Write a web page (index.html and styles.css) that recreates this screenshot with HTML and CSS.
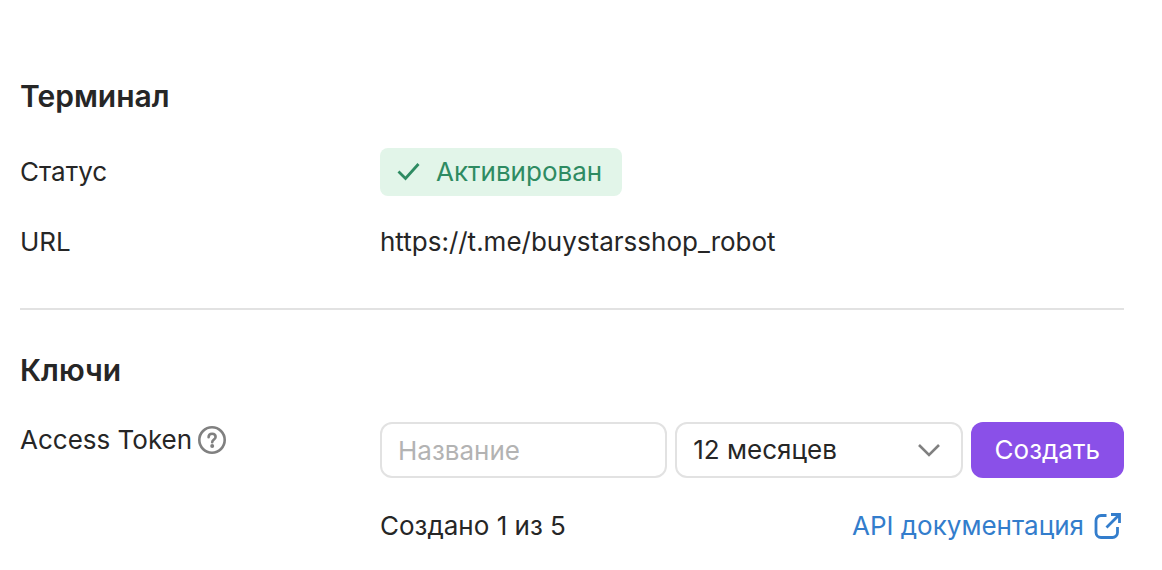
FILE: index.html
```html
<!DOCTYPE html>
<html lang="ru">
<head>
  <meta charset="UTF-8" />
  <meta name="viewport" content="width=device-width, initial-scale=1.0" />
  <title>Терминал</title>
  <link rel="stylesheet" href="styles.css">
</head>
<body>
  <main class="page">
    <!-- Terminal info -->
    <section class="section">
      <h2 class="section-title">Терминал</h2>
      <dl class="info">
        <div class="row">
          <dt class="label">Статус</dt>
          <dd class="value">
            <span class="status">
              <svg class="status-icon" viewBox="0 0 24 24" aria-hidden="true">
                <path d="M2.500 11.500l7 7L22.500 4" />
              </svg>
              Активирован
            </span>
          </dd>
        </div>
        <div class="row">
          <dt class="label">URL</dt>
          <dd class="value">https://t.me/buystarsshop_robot</dd>
        </div>
      </dl>
    </section>

    <!-- Access keys -->
    <section class="section keys">
      <h2 class="section-title">Ключи</h2>
      <div class="row row-top">
        <div class="label label-help">
          <label for="token-name">Access Token</label>
          <svg class="help-icon" viewBox="0 0 28 28" role="img" aria-label="Подсказка">
            <circle cx="14" cy="14" r="12.7" />
            <path d="M10.6 11.2c0-2 1.400-3.400 3.500-3.400s3.500 1.400 3.500 3.200c0 2.500-3.400 2.600-3.400 5.300" />
            <circle class="help-dot" cx="14.2" cy="20" r="2" />
          </svg>
        </div>
        <div class="value">
          <form class="token-form">
            <input class="field" id="token-name" type="text" placeholder="Название">
            <div class="select-wrap">
              <select class="field" aria-label="Срок действия">
                <option>12 месяцев</option>
              </select>
              <svg class="select-arrow" viewBox="0 0 24 24" aria-hidden="true">
                <path d="M2 7l10 10L22 7" />
              </svg>
            </div>
            <button class="button" type="submit">Создать</button>
          </form>
          <div class="summary">
            <span>Создано 1 из 5</span>
            <a class="link" href="#">
              API документация
              <svg class="link-icon" viewBox="0 0 28 28" aria-hidden="true">
                <path d="M12.5 3.500H7a5 5 0 0 0-5 5V20.500a5 5 0 0 0 5 5h11.500a5 5 0 0 0 5-5V15M17 2.500H25.500V11M25.500 2.500L12.500 15.500" />
              </svg>
            </a>
          </div>
        </div>
      </div>
    </section>
  </main>
</body>
</html>
```
FILE: styles.css
```css
* {
  margin: 0;
  padding: 0;
  box-sizing: border-box;
}
body {
  font-family: Inter, "Liberation Sans", sans-serif;
  font-size: 26px;
  line-height: 32px;
  color: #262626;
  background-color: #fff;
}
.page {
  padding: 76px 38px 28px 20px;
}
.section-title {
  font-size: 30px;
  line-height: 40px;
  font-weight: 600;
  margin-bottom: 32px;
}
/* Second section is divided from the first one */
.keys {
  margin-top: 50px;
  padding-top: 40px;
  border-top: 2px solid #e2e2e2;
}
/* Label + value rows */
.info {
  display: grid;
  gap: 30px;
}
.row {
  display: grid;
  grid-template-columns: 360px 1fr;
  align-items: center;
}
.row-top {
  align-items: start;
}
.label-help {
  display: flex;
  align-items: center;
  gap: 6px;
  padding-top: 2px;
}
.help-icon {
  width: 28px;
  height: 28px;
  fill: none;
  stroke: #808080;
  stroke-width: 2.6;
  stroke-linecap: round;
}
.help-dot {
  fill: #808080;
  stroke: none;
}
.status {
  display: inline-flex;
  align-items: center;
  gap: 16px;
  height: 48px;
  padding: 0 20px 0 16px;
  border-radius: 8px;
  color: #2e8b62;
  background-color: #e2f5e9;
  vertical-align: top;
}
.status-icon {
  width: 24px;
  height: 24px;
  fill: none;
  stroke: currentColor;
  stroke-width: 2.8;
}
/* Token form */
.token-form {
  display: grid;
  grid-template-columns: 1fr 1fr auto;
  gap: 8px;
}
.field {
  width: 100%;
  height: 56px;
  padding: 0 16px;
  border: 2px solid #e2e2e2;
  border-radius: 12px;
  font: inherit;
  color: inherit;
  background-color: #fff;
  appearance: none;
}
.field::placeholder {
  color: #b3b3b3;
  opacity: 1;
}
.select-wrap {
  position: relative;
}
.select-arrow {
  position: absolute;
  top: 16px;
  right: 22px;
  width: 24px;
  height: 24px;
  fill: none;
  stroke: #808080;
  stroke-width: 2.6;
  pointer-events: none;
}
.button {
  height: 56px;
  padding: 0 24px;
  border: none;
  border-radius: 12px;
  font: inherit;
  color: #fff;
  background-color: #8a50e8;
  cursor: pointer;
}
.summary {
  display: flex;
  justify-content: space-between;
  margin-top: 32px;
  padding-right: 2px;
}
.link {
  display: flex;
  align-items: center;
  gap: 10px;
  color: #337dcc;
  text-decoration: none;
}
.link-icon {
  width: 28px;
  height: 28px;
  fill: none;
  stroke: currentColor;
  stroke-width: 2.8;
}
```
